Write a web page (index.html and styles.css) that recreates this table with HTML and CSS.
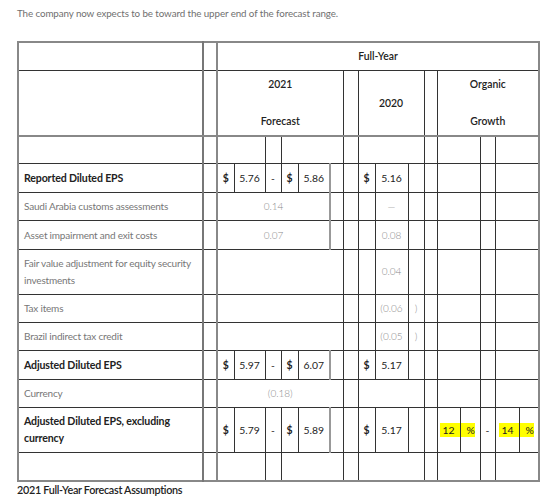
FILE: index.html
```html
<!DOCTYPE html>
<html lang="en">
<head>
    <meta charset="UTF-8">
    <meta name="viewport" content="width=device-width, initial-scale=1.0">
    <title>2021 Forecast</title>
    <link rel="stylesheet" href="styles.css">
</head>
<body>
    <div class="page">
        <p class="intro">The company now expects to be toward the upper end of the forecast range.</p>

        <!-- Forecast table -->
        <table class="forecast">
            <colgroup>
                <col><col><col><col><col><col><col><col><col><col><col><col><col><col><col><col><col><col>
            </colgroup>
            <tr class="head">
                <td></td><td class="gap"></td>
                <td colspan="16">Full-Year</td>
            </tr>
            <tr class="head tall">
                <td></td><td class="gap"></td>
                <td colspan="6">2021<br><br>Forecast</td>
                <td></td>
                <td colspan="3">2020</td>
                <td></td>
                <td colspan="5">Organic<br><br>Growth</td>
            </tr>
            <tr class="sub">
                <td></td><td class="gap"></td>
                <td colspan="2"></td><td></td><td colspan="3"></td>
                <td></td>
                <td colspan="3"></td>
                <td></td>
                <td colspan="2"></td><td></td><td colspan="2"></td>
            </tr>
            <tr class="total">
                <td class="label">Reported Diluted EPS</td><td class="gap"></td>
                <td class="cur">$</td><td>5.76</td><td>-</td><td class="cur">$</td><td>5.86</td><td class="soft"></td>
                <td></td>
                <td class="cur">$</td><td>5.16</td><td></td>
                <td></td>
                <td colspan="2"></td><td></td><td colspan="2"></td>
            </tr>
            <tr class="item">
                <td class="label">Saudi Arabia customs assessments</td><td class="gap"></td>
                <td colspan="5">0.14</td><td class="soft"></td>
                <td></td>
                <td></td><td>&mdash;</td><td></td>
                <td></td>
                <td colspan="2"></td><td></td><td colspan="2"></td>
            </tr>
            <tr class="item">
                <td class="label">Asset impairment and exit costs</td><td class="gap"></td>
                <td colspan="5">0.07</td><td class="soft"></td>
                <td></td>
                <td></td><td>0.08</td><td></td>
                <td></td>
                <td colspan="2"></td><td></td><td colspan="2"></td>
            </tr>
            <tr class="item">
                <td class="label">Fair value adjustment for equity security investments</td><td class="gap"></td>
                <td colspan="6"></td>
                <td></td>
                <td></td><td>0.04</td><td></td>
                <td></td>
                <td colspan="2"></td><td></td><td colspan="2"></td>
            </tr>
            <tr class="item">
                <td class="label">Tax items</td><td class="gap"></td>
                <td colspan="6"></td>
                <td></td>
                <td></td><td>(0.06</td><td>)</td>
                <td></td>
                <td colspan="2"></td><td></td><td colspan="2"></td>
            </tr>
            <tr class="item">
                <td class="label">Brazil indirect tax credit</td><td class="gap"></td>
                <td colspan="6"></td>
                <td></td>
                <td></td><td>(0.05</td><td>)</td>
                <td></td>
                <td colspan="2"></td><td></td><td colspan="2"></td>
            </tr>
            <tr class="total">
                <td class="label">Adjusted Diluted EPS</td><td class="gap"></td>
                <td class="cur">$</td><td>5.97</td><td>-</td><td class="cur">$</td><td>6.07</td><td class="soft"></td>
                <td></td>
                <td class="cur">$</td><td>5.17</td><td></td>
                <td></td>
                <td colspan="2"></td><td></td><td colspan="2"></td>
            </tr>
            <tr class="item">
                <td class="label">Currency</td><td class="gap"></td>
                <td colspan="6">(0.18)</td>
                <td></td>
                <td colspan="3"></td>
                <td></td>
                <td colspan="2"></td><td></td><td colspan="2"></td>
            </tr>
            <tr class="total">
                <td class="label">Adjusted Diluted EPS, excluding currency</td><td class="gap"></td>
                <td class="cur">$</td><td>5.79</td><td>-</td><td class="cur">$</td><td>5.89</td><td class="soft"></td>
                <td></td>
                <td class="cur">$</td><td>5.17</td><td></td>
                <td></td>
                <td class="num-hl"><span class="hl">12</span></td><td class="pct-hl"><span class="hl">%</span></td>
                <td>-</td>
                <td class="num-hl"><span class="hl">14</span></td><td class="pct-hl"><span class="hl">%</span></td>
            </tr>
            <tr>
                <td></td><td class="gap"></td>
                <td colspan="2"></td><td></td><td colspan="3"></td>
                <td></td>
                <td colspan="3"></td>
                <td></td>
                <td colspan="2"></td><td></td><td colspan="2"></td>
            </tr>
        </table>

        <h4 class="section-title">2021 Full-Year Forecast Assumptions</h4>
    </div>
</body>
</html>
```

FILE: styles.css
```css
/* General Reset */
* {
    margin: 0;
    padding: 0;
    box-sizing: border-box;
}

body {
    font-family: Lato, "Liberation Sans", sans-serif;
    background-color: #fff;
    color: #222;
}

.page {
    padding: 6px 0 0 17px;
}

.intro {
    font-size: 9.8px;
    font-weight: 400;
    letter-spacing: -0.1px;
    line-height: 14px;
    color: #707070;
    margin-bottom: 21px;
}

/* Forecast table */
.forecast {
    border-collapse: collapse;
    table-layout: fixed;
    width: 518px;
    border: 2px solid #888;
}

.forecast col:nth-child(1) { width: 185px; }
.forecast col:nth-child(2) { width: 14px; }
.forecast col:nth-child(3) { width: 17px; }
.forecast col:nth-child(4) { width: 31px; }
.forecast col:nth-child(5) { width: 16px; }
.forecast col:nth-child(6) { width: 17px; }
.forecast col:nth-child(7) { width: 32px; }
.forecast col:nth-child(8) { width: 13px; }
.forecast col:nth-child(9) { width: 15px; }
.forecast col:nth-child(10) { width: 17px; }
.forecast col:nth-child(11) { width: 33px; }
.forecast col:nth-child(12) { width: 16px; }
.forecast col:nth-child(13) { width: 13px; }
.forecast col:nth-child(14) { width: 23px; }
.forecast col:nth-child(15) { width: 20px; }
.forecast col:nth-child(16) { width: 15px; }
.forecast col:nth-child(17) { width: 24px; }
.forecast col:nth-child(18) { width: 20px; }

.forecast tr {
    height: 28.4px;
}

.forecast tr.tall {
    height: 65.2px;
}

.forecast td {
    border: 1px solid #333;
    padding: 0;
    font-size: 10.4px;
    line-height: 16.65px;
    text-align: center;
    vertical-align: middle;
    white-space: nowrap;
}

/* grey double rules round the spacer column */
.forecast td.gap {
    border-left: 2px solid #777;
    border-right: 2px solid #888;
}

.forecast td.soft {
    border-left: 2px solid #999;
}

.forecast tr.tall td {
    border-bottom: 2px solid #888;
}

.forecast td.label {
    text-align: left;
    padding: 5.3px 3px 5.3px 5px;
    white-space: normal;
}

.forecast .head td {
    font-weight: 600;
}

.forecast .tall td {
    line-height: 18.3px;
}

.forecast .total td.label {
    font-weight: 700;
    font-size: 10.6px;
    letter-spacing: -0.15px;
}

.forecast .total td.cur {
    font-weight: 700;
}

.forecast .item td {
    font-weight: 300;
    font-size: 10px;
    color: #8a8a8a;
}

.forecast .item td.label {
    font-weight: 400;
    font-size: 10px;
    letter-spacing: -0.2px;
    color: #777;
}

/* Highlighted growth range */
.forecast td.num-hl {
    text-align: right;
}

.forecast td.pct-hl {
    text-align: left;
}

.hl {
    background-color: #ffff00;
    line-height: 14px;
    display: inline-block;
}

.num-hl .hl {
    padding: 0 5px 0 2px;
}

.pct-hl .hl {
    padding: 0 0 0 6px;
}

.section-title {
    font-size: 10.8px;
    font-weight: 600;
    letter-spacing: -0.3px;
    line-height: 16px;
    color: #222;
}
```
